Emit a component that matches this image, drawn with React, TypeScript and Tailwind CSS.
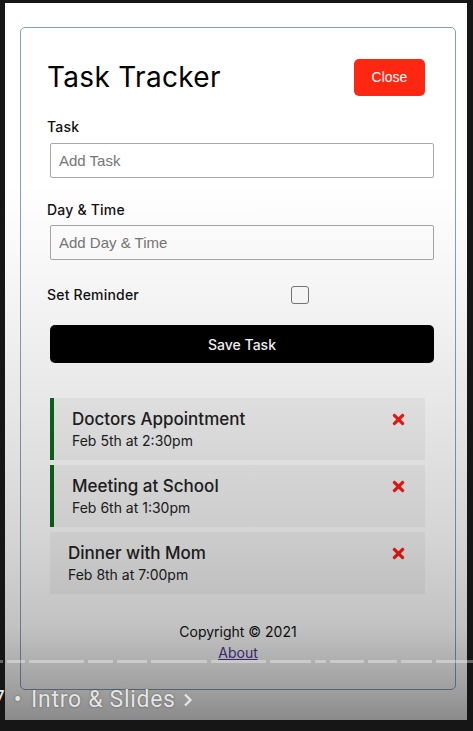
import { FaTimes } from 'react-icons/fa';

type Task = {
  id: number;
  text: string;
  day: string;
  reminder: boolean;
};

const tasks: Task[] = [
  { id: 1, text: 'Doctors Appointment', day: 'Feb 5th at 2:30pm', reminder: true },
  { id: 2, text: 'Meeting at School', day: 'Feb 6th at 1:30pm', reminder: true },
  { id: 3, text: 'Dinner with Mom', day: 'Feb 8th at 7:00pm', reminder: false },
];

const TaskItem = ({ task }: { task: Task }) => (
  <div
    className={
      task.reminder
        ? 'bg-[#f4f4f4] border-l-4 border-[#0b6a1e] pl-[18px] pr-[18px] pt-[9px] pb-[9px]'
        : 'bg-[#f4f4f4] pl-[18px] pr-[18px] pt-[9px] pb-[9px]'
    }
  >
    <h3 className="flex items-center justify-between text-[17px] leading-[24px] font-medium text-[#222]">
      {task.text}
      <FaTimes className="text-[#ff1a10]" size={17} />
    </h3>
    <p className="text-[14px] leading-[20px] text-[#222]">{task.day}</p>
  </div>
);

const App = () => {
  return (
    <div className="relative w-[473px] h-[731px] bg-[#161616] pt-[3px] pl-[5px] overflow-hidden font-['Inter',sans-serif]">
      {/* video frame */}
      <div className="relative w-[462px] h-[717px] bg-white pt-[24px] pl-[15px]">
        <div className="w-[436px] h-[663px] border border-[#86a0bb] rounded-[5px] px-[26px] pt-[26px]">
          <header className="flex items-center justify-between h-[46px]">
            <h1 className="text-[28px] leading-none font-normal text-black tracking-[0.3px]">Task Tracker</h1>
            <button className="w-[71px] h-[37px] mr-[4px] bg-[#ff2612] text-white rounded-[5px] text-[14px] font-['Liberation_Sans',sans-serif]">
              Close
            </button>
          </header>

          <form className="mt-[16px]">
            <div>
              <label className="block text-[14px] leading-[22px] font-medium text-[#111] tracking-[0.2px]">Task</label>
              <input
                type="text"
                placeholder="Add Task"
                className="block w-[384px] h-[35px] mt-[5px] ml-[3px] border border-[#a8a8a8] rounded-[2px] px-[8px] text-[15px] font-['Liberation_Sans',sans-serif] placeholder-[#767676] outline-none"
              />
            </div>
            <div className="mt-[21px]">
              <label className="block text-[14px] leading-[22px] font-medium text-[#111] tracking-[0.2px]">Day &amp; Time</label>
              <input
                type="text"
                placeholder="Add Day & Time"
                className="block w-[384px] h-[35px] mt-[4px] ml-[3px] border border-[#a8a8a8] rounded-[2px] px-[8px] text-[15px] font-['Liberation_Sans',sans-serif] placeholder-[#767676] outline-none"
              />
            </div>
            <div className="flex items-center mt-[24px] h-[22px]">
              <label className="flex-1 text-[14px] leading-[22px] font-medium text-[#111] tracking-[0.2px]">Set Reminder</label>
              <div className="flex-[2] flex justify-center pr-[2px]">
                <span className="block w-[18px] h-[18px] border-[1.5px] border-[#777] rounded-[3px] bg-white" />
              </div>
            </div>
            <button
              type="button"
              className="block w-[384px] h-[38px] mt-[19px] ml-[3px] bg-black text-white rounded-[5px] text-[14px] font-medium"
            >
              Save Task
            </button>
          </form>

          <div className="mt-[35px] ml-[3px] w-[375px] flex flex-col gap-[5px]">
            {tasks.map((task) => (
              <TaskItem key={task.id} task={task} />
            ))}
          </div>

          <footer className="mt-[27px] text-center text-[14px] leading-[21px] text-[#111]">
            <p>Copyright &copy; 2021</p>
            <a href="#" className="underline text-[#4b3a9a]">About</a>
          </footer>
        </div>

        {/* player shade */}
        <div className="absolute inset-0 pointer-events-none bg-[linear-gradient(to_bottom,rgba(0,0,0,0)_0%,rgba(0,0,0,0)_25%,rgba(0,0,0,0.04)_40%,rgba(0,0,0,0.09)_55%,rgba(0,0,0,0.17)_75%,rgba(0,0,0,0.24)_87%,rgba(0,0,0,0.38)_96%,rgba(0,0,0,0.46)_100%)]" />
      </div>

      {/* progress bar chapters */}
      <div className="absolute left-0 top-[660px] flex gap-[4px] h-[3px]">
        <span className="w-[3px] bg-white/35" />
        <span className="w-[18px] bg-white/35" />
        <span className="w-[55px] bg-white/35" />
        <span className="w-[25px] bg-white/35" />
        <span className="w-[30px] bg-white/35" />
        <span className="w-[56px] bg-white/35" />
        <span className="w-[55px] bg-white/35" />
        <span className="w-[41px] bg-white/35" />
        <span className="w-[11px] bg-white/35" />
        <span className="w-[34px] bg-white/35" />
        <span className="w-[29px] bg-white/35" />
        <span className="w-[31px] bg-white/35" />
        <span className="w-[37px] bg-white/35" />
      </div>

      {/* chapter title */}
      <div className="absolute left-[-8px] top-[687px] flex items-center text-[23px] leading-[26px] tracking-[0.7px] text-[#e6e6e6] font-['Roboto',sans-serif] [text-shadow:0_0_2px_rgba(0,0,0,0.5)]">
        <span>7</span>
        <span className="ml-[8px]">•</span>
        <span className="ml-[9px]">Intro &amp; Slides</span>
        <svg className="ml-[6px]" width="11" height="16" viewBox="0 0 11 16" fill="none" stroke="#e6e6e6" strokeWidth="2.2">
          <path d="M3 2.5l5.5 5.5-5.5 5.5" />
        </svg>
      </div>
    </div>
  );
};

export default App;
